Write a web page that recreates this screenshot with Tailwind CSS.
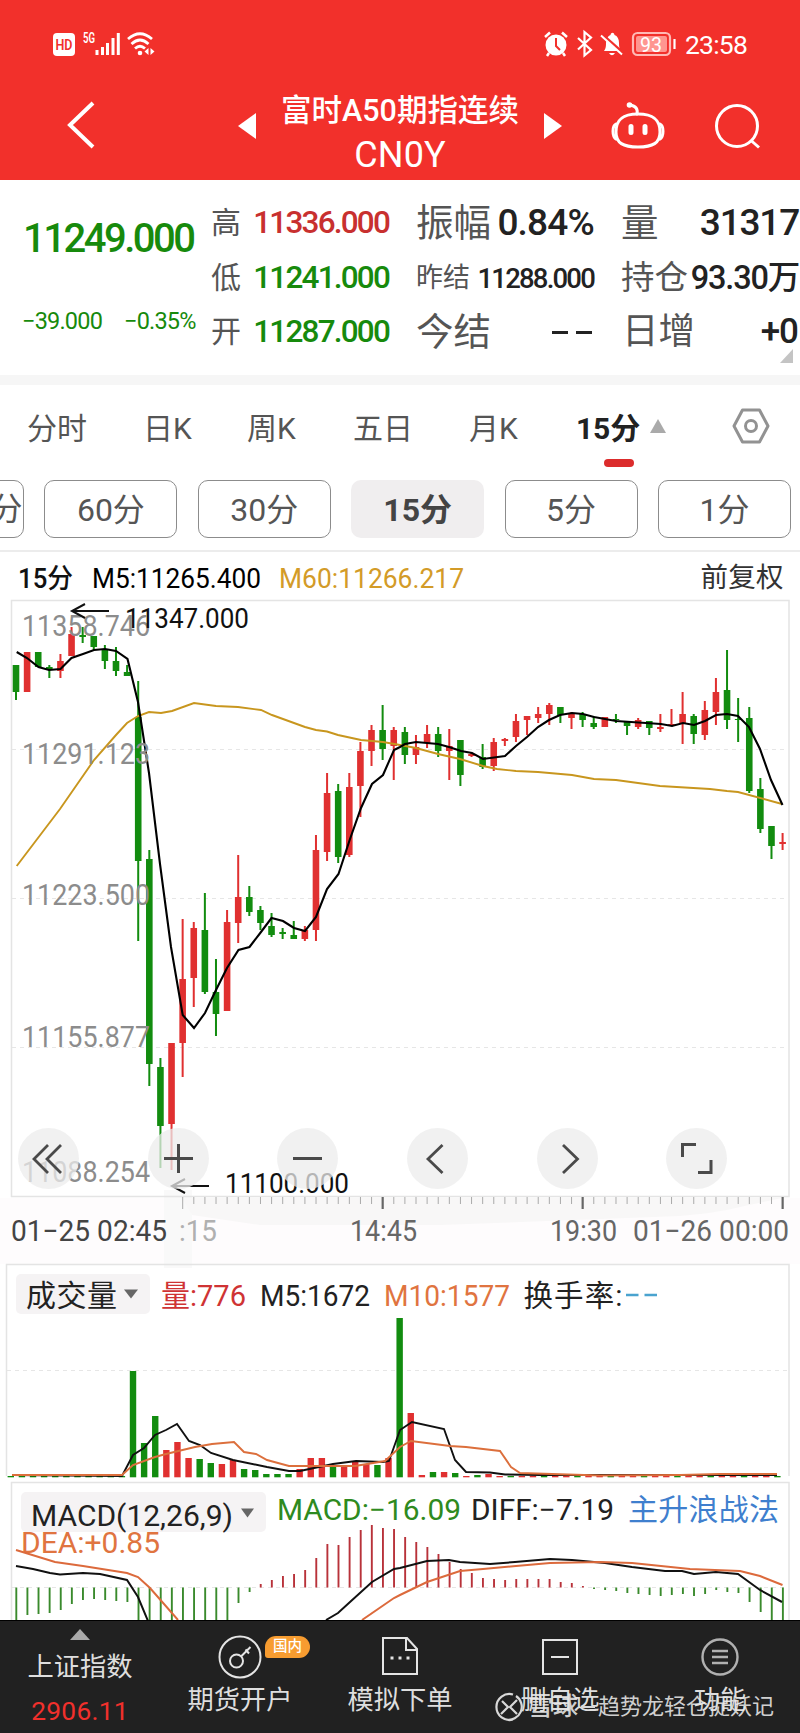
<!DOCTYPE html>
<html lang="zh-CN">
<head>
    <meta charset="UTF-8">
    <meta name="viewport" content="width=device-width, initial-scale=1.0">
    <title>富时A50期指连续 CN0Y</title>
    <script src="https://cdn.jsdelivr.net/npm/@tailwindcss/browser@4"></script>
</head>
<body class="w-[800px] h-[1733px] overflow-hidden bg-white text-[#222] font-['Roboto','Noto_Sans_CJK_SC',sans-serif] whitespace-nowrap">

    <!-- Header -->
    <header class="h-[180px] bg-[#f2302b] text-white">
        <div class="h-[88px] flex items-center justify-between pl-[53px] pr-[53px]">
            <svg class="w-[104px] h-[30px]" viewBox="53 29 104 30" fill="none" stroke="#fff">
                <rect x="53" y="33" width="22" height="23" rx="4" fill="#fff" stroke="none"/>
                <text x="55.5" y="50" font-size="15" font-weight="600" fill="#f2302b" stroke="none" textLength="17" lengthAdjust="spacingAndGlyphs">HD</text>
                <text x="83" y="43" font-size="15" font-weight="600" fill="#fff" stroke="none" textLength="12" lengthAdjust="spacingAndGlyphs">5G</text>
                <path d="M97 55V50M102.5 55V47M107.5 55V43M113 55V38M118.3 55V33" stroke-width="3"/>
                <path d="M128 39Q140 28.500 152 39M131.500 44Q140 36 148.500 44M135 48.500Q140 44 145 48.500" stroke-width="2.800"/>
                <circle cx="140" cy="53" r="2.300" fill="#fff" stroke="none"/>
                <path d="M148.500 48v7l-4-3.500zM150.500 48v7l4-3.500z" fill="#fff" stroke="none"/>
            </svg>
            <div class="flex items-center">
                <svg class="w-[136px] h-[30px]" viewBox="542 29 136 30" fill="none" stroke="#fff">
                    <circle cx="556" cy="45" r="10.500" fill="#fff" stroke="none"/>
                    <path d="M545 37l5-4.500M567 37l-5-4.500M549 53l-2 3M563 53l2 3" stroke-width="2.500"/>
                    <path d="M556 38v8l4 4" stroke="#f2302b" stroke-width="2"/>
                    <path d="M578 38l13 12-6.500 5.500V32l6.500 5.500-13 12" stroke-width="2.200"/>
                    <path d="M604 51c2-3 2-5 2-8 0-4 2-7 4.500-8 .5-3 3.500-3 4 0 3 1 4.500 4 4.500 8 0 3 0 5 2 8zM609 53h6q-3 4.500-6 0z" fill="#fff" stroke="none"/>
                    <path d="M602.500 35l21 18.500" stroke="#f2302b" stroke-width="3"/>
                    <path d="M601 35.500l21 19" stroke-width="2"/>
                    <rect x="633" y="33" width="37" height="22" rx="4.500" stroke="#ffb9b5" stroke-width="2.200"/>
                    <rect x="636" y="36" width="31" height="16" rx="2" fill="#ff9690" stroke="none"/>
                    <path d="M674.500 39v10" stroke-width="2.200"/>
                    <text x="640" y="51.500" font-size="20" font-weight="400" fill="#fff" stroke="none" textLength="22" lengthAdjust="spacingAndGlyphs">93</text>
                </svg>
                <span class="ml-[7px] text-[26.500px] tracking-[-0.8px] leading-[30px] mt-[1px]">23:58</span>
            </div>
        </div>
        <div class="h-[92px] flex items-start relative">
            <svg class="w-[36px] h-[60px] ml-[62px] mt-[7px]" viewBox="62 95 36 60" fill="none" stroke="#fff" stroke-width="4"><path d="M93 103L70 125l23 22"/></svg>
            <svg class="w-[20px] h-[28px] ml-[139px] mt-[24px]" viewBox="0 0 20 28" fill="#fff"><path d="M1 14L19 1v26z"/></svg>
            <div class="w-[286px] text-center">
                <div class="text-[30.500px] leading-[42px] font-medium mt-[2px]">富时A50期指连续</div>
                <div class="text-[36px] leading-[42px] font-normal tracking-[0.1px] mt-[2px]">CN0Y</div>
            </div>
            <svg class="w-[20px] h-[28px] mt-[24px]" viewBox="0 0 20 28" fill="#fff"><path d="M19 14L1 1v26z"/></svg>
            <svg class="w-[60px] h-[54px] ml-[45px] mt-[10px]" viewBox="608 98 60 54" fill="none" stroke="#fff" stroke-width="3">
                <path d="M638 114c17 0 22 7 22 18 0 11-7 15-22 15s-22-4-22-15c0-11 5-18 22-18z"/>
                <path d="M616 124c-4 2-4 12 0 15M660 124c4 2 4 12 0 15M637 114c1-5-1-8-7-9" stroke-linecap="round"/>
                <circle cx="629.500" cy="105" r="2.800" fill="#fff" stroke="none"/>
                <path d="M631 126.500v6M645 126.500v6" stroke-width="5" stroke-linecap="round"/>
            </svg>
            <svg class="w-[50px] h-[54px] ml-[44px] mt-[10px]" viewBox="712 98 50 54" fill="none" stroke="#fff" stroke-width="3"><circle cx="737" cy="126" r="20.500"/><path d="M750.500 140l8.500 7.500"/></svg>
        </div>
    </header>

    <!-- Quote -->
    <section class="h-[195px] flex pt-[15px] relative">
        <div class="w-[211px] pl-[23px] text-[#178a0c]">
            <div class="text-[40px] leading-[48px] font-medium tracking-[-2.500px] mt-[20px]">11249.000</div>
            <div class="flex text-[23.500px] leading-[28px] tracking-[-0.8px] mt-[44px]">
                <span class="w-[102px] -ml-px">−39.000</span><span>−0.35%</span>
            </div>
        </div>
        <div class="w-[178px] text-[31.500px] font-medium tracking-[-1.800px] text-[#178a0c]">
            <div class="h-[55px] flex items-center justify-between"><span class="text-[30px] font-normal text-[#555] tracking-normal">高</span><span class="text-[#c8302f]">11336.000</span></div>
            <div class="h-[55px] flex items-center justify-between"><span class="text-[30px] font-normal text-[#555] tracking-normal">低</span><span>11241.000</span></div>
            <div class="h-[53px] flex items-center justify-between"><span class="text-[30px] font-normal text-[#555] tracking-normal">开</span><span>11287.000</span></div>
        </div>
        <div class="w-[178px] ml-[27px] font-medium">
            <div class="h-[56px] flex items-center justify-between"><span class="text-[37.500px] font-normal text-[#555]">振幅</span><span class="text-[37px] tracking-[-0.800px]">0.84%</span></div>
            <div class="h-[55px] flex items-center justify-between"><span class="text-[27px] font-normal text-[#555]">昨结</span><span class="text-[27.500px] tracking-[-1.800px]">11288.000</span></div>
            <div class="h-[53px] flex items-center justify-between"><span class="text-[37.500px] font-normal text-[#555]">今结</span><span class="flex gap-[8px] pr-[2px]"><i class="w-[16px] h-[3px] bg-[#222]"></i><i class="w-[16px] h-[3px] bg-[#222]"></i></span></div>
        </div>
        <div class="w-[178px] ml-[27px] font-medium">
            <div class="h-[56px] flex items-center justify-between"><span class="text-[37.500px] font-normal text-[#555]">量</span><span class="text-[37px] tracking-[-1.200px]">31317</span></div>
            <div class="h-[55px] flex items-center justify-between"><span class="text-[33.500px] font-normal text-[#555]">持仓</span><span class="text-[32.500px] tracking-[-1.200px]">93.30万</span></div>
            <div class="h-[53px] flex items-center justify-between"><span class="text-[36.500px] font-normal text-[#555] pl-px">日增</span><span class="text-[35px] tracking-[-1px] pr-px">+0</span></div>
        </div>
        <svg class="absolute left-[780px] top-[169px] w-[13px] h-[14px]" viewBox="0 0 13 14" fill="#c4c4c4"><path d="M13 0v14H0z"/></svg>
    </section>
    <div class="h-[10px] bg-[#f6f6f6]"></div>

    <!-- Period tabs -->
    <nav class="h-[86px] flex items-center text-[30px] text-[#555] pl-[27px]">
        <span class="w-[116px]">分时</span>
        <span class="w-[104px]">日K</span>
        <span class="w-[106px]">周K</span>
        <span class="w-[116px]">五日</span>
        <span class="w-[107px]">月K</span>
        <span class="w-[74px] font-bold text-[#222] tracking-[-0.1px] relative">15分<i class="absolute left-[28px] top-[53px] w-[30px] h-[8px] rounded-full bg-[#dc2c2c]"></i></span>
        <svg class="w-[16px] h-[14px] -mt-[4px]" viewBox="0 0 16 14" fill="#aaa"><path d="M8 0l8 14H0z"/></svg>
        <svg class="w-[38px] h-[36px] ml-[66px] -mt-[4px]" viewBox="0 0 38 36" fill="none" stroke="#929292" stroke-width="3"><path d="M10.500 2h17L36 18l-8.500 16h-17L2 18z" stroke-linejoin="round"/><circle cx="19" cy="18" r="5.500"/></svg>
    </nav>
    <div class="h-[81px] pt-[9px] flex gap-[20.400px] -ml-[109px] w-[909px] text-[32px] text-[#555] border-b-2 border-[#ececec]">
        <div class="w-[133px] h-[58px] shrink-0 border border-[#8c8c8c] rounded-[10px] flex items-center justify-center"><span class="pl-[44px]">120分</span></div>
        <div class="w-[133px] h-[58px] shrink-0 border border-[#8c8c8c] rounded-[10px] flex items-center justify-center pt-[2px]">60分</div>
        <div class="w-[133px] h-[58px] shrink-0 border border-[#8c8c8c] rounded-[10px] flex items-center justify-center pt-[2px]">30分</div>
        <div class="w-[133px] h-[58px] shrink-0 bg-[#f0eeef] rounded-[10px] flex items-center justify-center pt-[2px] font-bold text-[#444]">15分</div>
        <div class="w-[133px] h-[58px] shrink-0 border border-[#8c8c8c] rounded-[10px] flex items-center justify-center pt-[2px]">5分</div>
        <div class="w-[133px] h-[58px] shrink-0 border border-[#8c8c8c] rounded-[10px] flex items-center justify-center pt-[2px]">1分</div>
    </div>

    <!-- Charts, drawn in page pixels -->
    <main class="relative h-[1068px]">
        <svg id="chart" class="block w-[800px] h-[1068px]" viewBox="0 552 800 1068" fill="none">
            <rect x="0" y="1198" width="800" height="66" fill="#fefcfd"/>
            <rect x="164" y="1190" width="28" height="78" fill="#f9f9f9"/>
            <path d="M182 1198H783C740 1206 730 1212 680 1216L440 1225H260L192 1215z" fill="#f8f7f7"/>
            <g stroke="#e4e4e4" stroke-width="1.500">
                <path d="M11.500 600.500H789V1196.500H11.500z"/>
                <path d="M6.500 1476V1264.500H789V1476"/>
                <path d="M11.500 1620V1482.500H789V1620"/>
            </g>
            <g stroke="#e6e6e6" stroke-dasharray="4 4">
                <path d="M12 749.500H788M12 898.500H788M12 1047.500H788M7 1370.500H788M12 1587.500H788"/>
            </g>
            <g id="ticks" stroke="#aaa"></g>
            <g id="candles"></g>
            <path stroke="#c8961e" stroke-width="1.900" d="M16.700 866L60 809L94 760L116 735L127 723L138 716L149 712L161 713L172 711L194 703L216 706L238 707L261 710L272 715L305 727L316 730L327 731.500L338 735L361 740L372 741L383 742L400 745L416 748L438 754L460 759L483 766L497 769L516 771L538 772L572 775L594 779L616 780L660 786L710 789L727 791L738 792L782 804"/>
            <path stroke="#000" stroke-width="2.100" d="M16.700 652L27 658L38.500 667L49 670L60.500 669L71.500 658L83 654L94 650L105 649L116 651L127.500 659L138 702L149 773L160 864L171 947L182.700 1015L194 1028L205 1013L216 990L227 968L238.500 950L249.500 947L261 932L271.500 918L283 921L294 928L305 931L316 917L327 889L338.500 874L350 839L361 808L372 784L383 775L394 750L400 747L405 744L416 742L438 744L449 747L461 751L472 753L483 759L505 756L516 746L527 737L538 727L549 720L560 715L572 713L583 714L594 717L616 721L661 724L672 726L683 723L694 725L705 721L716 715L727 714L738 716L749 727L760 749L771 780L782.500 805"/>

            <g font-size="27.500" font-weight="400">
                <text x="18" y="587.500" fill="#111" font-weight="500" textLength="55" lengthAdjust="spacingAndGlyphs">15分</text>
                <text x="92" y="587.500" fill="#000" textLength="169" lengthAdjust="spacingAndGlyphs">M5:11265.400</text>
                <text x="279" y="587.500" fill="#d39b28" textLength="185" lengthAdjust="spacingAndGlyphs">M60:11266.217</text>
                <text x="700.500" y="587" fill="#333" textLength="83">前复权</text>
            </g>
            <g font-size="29.500" fill="#8c8c8c">
                <text x="22" y="636" textLength="128" lengthAdjust="spacingAndGlyphs">11358.746</text>
                <text x="22" y="763.500" textLength="128" lengthAdjust="spacingAndGlyphs">11291.123</text>
                <text x="22" y="905" textLength="128" lengthAdjust="spacingAndGlyphs">11223.500</text>
                <text x="22" y="1047" textLength="128" lengthAdjust="spacingAndGlyphs">11155.877</text>
                <text x="22" y="1182" textLength="128" lengthAdjust="spacingAndGlyphs">11088.254</text>
            </g>
            <g font-size="27" fill="#111">
                <text x="125" y="627.500" textLength="124" lengthAdjust="spacingAndGlyphs">11347.000</text>
                <text x="225" y="1193" textLength="124" lengthAdjust="spacingAndGlyphs">11100.000</text>
            </g>
            <g stroke="#111" stroke-width="2">
                <path d="M109 611H72M85 604L72 611L85 618"/>
                <path d="M209 1186H172M185 1179L172 1186L185 1193"/>
            </g>
            <g font-size="29" font-weight="400" fill="#666">
                <text x="11" y="1241" fill="#444" textLength="156" lengthAdjust="spacingAndGlyphs">01−25 02:45</text>
                <text x="179" y="1241" fill="#b0b0b0" textLength="38" lengthAdjust="spacingAndGlyphs">:15</text>
                <text x="350" y="1241" textLength="67" lengthAdjust="spacingAndGlyphs">14:45</text>
                <text x="550" y="1241" textLength="67" lengthAdjust="spacingAndGlyphs">19:30</text>
                <text x="633" y="1241" textLength="156" lengthAdjust="spacingAndGlyphs">01−26 00:00</text>
            </g>

            <!-- Volume -->
            <rect x="16" y="1274" width="134" height="40" rx="5" fill="#f5f3f4"/>
            <path d="M124 1289.500h14l-7 9z" fill="#666"/>
            <text x="26" y="1306" font-size="30" fill="#222" textLength="91">成交量</text>
            <g font-size="29.500" font-weight="400">
                <text x="161" y="1306" fill="#cf3334" textLength="85" lengthAdjust="spacingAndGlyphs">量:776</text>
                <text x="260" y="1306" fill="#222" textLength="110" lengthAdjust="spacingAndGlyphs">M5:1672</text>
                <text x="384" y="1306" fill="#e07440" textLength="126" lengthAdjust="spacingAndGlyphs">M10:1577</text>
                <text x="523.500" y="1306" fill="#222" textLength="99">换手率:</text>
                <path d="M626 1295h12.500M644.500 1295h12.500" stroke="#4aa3cf" stroke-width="2.600"/>
            </g>
            <g id="volume"></g>
            <path stroke="#111" stroke-width="1.900" d="M12 1475L122 1476L133 1455L144 1448L155 1435L166 1430L177 1424L189 1441L200 1445L211 1453L233 1460L267 1467L289 1471L300 1471L333 1464L356 1461L383 1462L389 1461L400 1430L412 1422L444 1429L455 1460L466 1472L490 1472.500L505 1474.500L540 1475L777 1475"/>
            <path stroke="#dc6f3c" stroke-width="1.900" d="M12 1475L122 1475L133 1465L155 1457L166 1454L195 1447L212 1444L234 1442L244 1452L256 1454L267 1460L289 1466L355 1466L385 1461L400 1447L411 1441L450 1446L466 1447L500 1451L511 1467L520 1473L600 1475.500L680 1475L720 1474L777 1474"/>

            <!-- MACD -->
            <rect x="21" y="1492" width="245" height="40" rx="5" fill="#f5f3f4"/>
            <path d="M241 1508.500h13l-6.500 9z" fill="#666"/>
            <g font-size="29.500" font-weight="400">
                <text x="31" y="1525.500" fill="#222" textLength="202" lengthAdjust="spacingAndGlyphs">MACD(12,26,9)</text>
                <text x="277" y="1520" fill="#2e8a20" textLength="184" lengthAdjust="spacingAndGlyphs">MACD:−16.09</text>
                <text x="471" y="1520" fill="#222" textLength="143" lengthAdjust="spacingAndGlyphs">DIFF:−7.19</text>
                <text x="628" y="1520" fill="#3f7fce" font-size="30" textLength="151">主升浪战法</text>
                <text x="21" y="1552.500" fill="#e07440" textLength="139" lengthAdjust="spacingAndGlyphs">DEA:+0.85</text>
            </g>
            <g id="macd" stroke-width="1.900"></g>
            <path stroke="#111" stroke-width="2" d="M16 1566L33 1569L50 1573L60 1574.500L83 1573L100 1574L127 1580L138 1597L148 1621M326 1620L338 1613L350 1602L372 1582L394 1569L400 1568L427 1561L449 1560L460 1562L490 1564L515 1562L550 1559L572 1560L605 1563L632 1567L665 1571L682 1571L694 1574L716 1572L738 1574L760 1590L782 1602"/>
            <path stroke="#dc6a3c" stroke-width="2" d="M16 1550L55 1562L83 1566L127 1573L138 1577L150 1588L178 1620M362 1620L394 1598L400 1595L427 1582L460 1571L483 1569L516 1566L550 1563L600 1562L632 1563L690 1569L740 1571L760 1576L782.500 1585"/>
        </svg>

        <!-- Chart controls -->
        <div class="absolute left-[18px] top-[576px] flex gap-[68.700px]">
            <button class="w-[61px] h-[61px] rounded-full bg-[#ececec]/75"><svg viewBox="0 0 61 61" fill="none" stroke="#4a4a4a" stroke-width="2.800"><path d="M30 17L16 31l14 14M43 17L29 31l14 14"/></svg></button>
            <button class="w-[61px] h-[61px] rounded-full bg-[#ececec]/75"><svg viewBox="0 0 61 61" fill="none" stroke="#4a4a4a" stroke-width="3"><path d="M16 30.500h29M30.500 16v29"/></svg></button>
            <button class="w-[61px] h-[61px] rounded-full bg-[#ececec]/75"><svg viewBox="0 0 61 61" fill="none" stroke="#4a4a4a" stroke-width="3"><path d="M16 30.500h29"/></svg></button>
            <button class="w-[61px] h-[61px] rounded-full bg-[#ececec]/75"><svg viewBox="0 0 61 61" fill="none" stroke="#4a4a4a" stroke-width="2.800"><path d="M35.500 17L21 31l14.500 14"/></svg></button>
            <button class="w-[61px] h-[61px] rounded-full bg-[#ececec]/75"><svg viewBox="0 0 61 61" fill="none" stroke="#4a4a4a" stroke-width="2.800"><path d="M26 17l14.500 14L26 45"/></svg></button>
            <button class="w-[61px] h-[61px] rounded-full bg-[#ececec]/75"><svg viewBox="0 0 61 61" fill="none" stroke="#4a4a4a" stroke-width="3"><path d="M16.500 29V16.500H30M45 32v12.500H32"/></svg></button>
        </div>
    </main>

    <!-- Bottom bar -->
    <footer class="relative h-[113px] bg-[#212121] border-t border-black text-[#dedede] text-[26.300px] leading-[34px] grid grid-cols-5 text-center">
        <div>
            <svg class="w-[20px] h-[11px] mx-auto mt-[8px]" viewBox="0 0 20 11" fill="#aaa"><path d="M10 0l10 11H0z"/></svg>
            <div class="mt-[10px]">上证指数</div>
            <div class="text-[#f0302c] mt-[11px] tracking-[0.3px] leading-[32px]">2906.11</div>
        </div>
        <div class="relative">
            <svg class="w-[44px] h-[44px] mx-auto mt-[14px]" viewBox="0 0 44 44" fill="none" stroke="#e4e4e4" stroke-width="2"><circle cx="22" cy="22" r="20.500"/><circle cx="18.500" cy="26" r="6.500"/><path d="M23 21.500l9.500-9.500M27.500 14.500l3.500 4" /></svg>
            <span class="absolute left-[105px] top-[15px] w-[45px] h-[22px] rounded-[11px] rounded-bl-[3px] bg-[#f79c30] text-white text-[14.500px] leading-[21px] font-medium">国内</span>
            <div class="mt-[4px]">期货开户</div>
        </div>
        <div>
            <svg class="w-[38px] h-[42px] mx-auto mt-[15px]" viewBox="0 0 38 42" fill="none" stroke="#e4e4e4" stroke-width="2"><path d="M2 2h24l10 11v25H2zM25 2v12h11"/><path d="M9.500 22h3M17.500 22h3M25.500 22h3" stroke-width="3"/></svg>
            <div class="mt-[5px]">模拟下单</div>
        </div>
        <div>
            <svg class="w-[38px] h-[42px] mx-auto mt-[15px]" viewBox="0 0 38 42" fill="none" stroke="#e4e4e4" stroke-width="2"><path d="M2 4h34v34H2zM10 21h18"/></svg>
            <div class="mt-[5px]">删自选</div>
        </div>
        <div>
            <svg class="w-[38px] h-[42px] mx-auto mt-[15px]" viewBox="0 0 38 42" fill="none" stroke="#b0b0b0" stroke-width="2.400"><circle cx="19" cy="21" r="17.500"/><path d="M11 15h16M11 21h16M11 27h16"/></svg>
            <div class="mt-[5px]">功能</div>
        </div>
        <div class="absolute left-[494px] top-[71px] flex items-center text-[22px] leading-[30px] text-[#e8e8e8]/90">
            <svg class="w-[30px] h-[30px]" viewBox="0 0 30 30" fill="none" stroke="#d8d8d8" stroke-width="2.200"><path d="M19 2.500A13 13 0 1 0 19 27.500M12 27.500A13 13 0 0 0 22 4"/><path d="M8 9l6 6-7 7M23 8l-7 7 7 7"/></svg>
            <span class="ml-[4px] text-[25px] font-medium">雪球</span><span class="ml-[3px] w-[14px] h-[2px] bg-[#d8d8d8]"></span><span class="ml-[3px]">趋势龙轻仓捉妖记</span>
        </div>
    </footer>

    <script>
        const RED = "#e03030";
        const GREEN = "#128c0f";
        const STEP = 11.11;

        // colour, high, body top, body bottom, low
        const candles = [
            ["g",665,665,692,700],["r",652,652,692,692],["g",652,652,667,667],["g",665,667,670,678],["r",654,661,671,678],
            ["r",627,634,656,656],["g",627,635,637,643],["g",636,636,647,650],["g",645,650,661,669],["g",647,661,671,676],
            ["g",665,672,676,676],["g",681,717,861,941],["g",850,859,1064,1086],["g",1058,1067,1126,1168],["r",1043,1043,1124,1170],
            ["r",919,979,1043,1077],["r",922,928,978,1007],["g",893,930,992,994],["g",959,992,1014,1036],["r",910,922,1011,1011],
            ["r",855,897,923,943],["g",886,897,912,916],["g",906,910,923,930],["g",913,926,935,937],["g",928,932,934,939],
            ["g",921,935,939,939],["r",926,930,939,941],["r",835,850,930,941],["r",773,793,852,861],["g",784,791,857,863],
            ["r",773,787,855,857],["r",742,751,786,817],["r",725,730,751,766],["g",705,730,749,760],["r",727,730,746,780],
            ["g",727,732,755,764],["r",735,747,755,764],["r",725,734,743,748],["g",727,734,751,757],["r",729,746,751,780],
            ["g",740,740,775,786],["r",753,754,756,757],["g",744,757,767,769],["r",738,742,766,771],["r",738,739,741,746],
            ["r",714,721,737,742],["r",716,716,720,735],["r",707,714,718,723],["r",703,705,714,725],["g",707,707,715,723],
            ["r",712,714,718,729],["g",712,714,720,727],["g",716,723,727,729],["r",717,717,727,727],["g",714,719,720,723],
            ["g",722,722,726,735],["r",718,720,727,729],["g",721,721,728,735],["r",714,727,729,732],["r",709,724,726,726],
            ["r",692,714,723,744],["g",714,716,734,744],["r",701,710,735,740],["r",678,692,712,725],["g",650,690,720,729],
            ["g",698,719,720,742],["g",707,718,791,793],["g",778,789,829,833],["g",826,826,846,859],["r",833,842,844,850]
        ];

        // top of each volume bar, starting at the 12th candle
        const volumes = [
            ["g",1371],["g",1443],["g",1416],["r",1450],["r",1442],["r",1458],["g",1459],["g",1463],["r",1464],["r",1460],
            ["g",1469],["g",1470],["g",1474],["g",1474],["g",1474],["r",1469],["r",1458],["r",1458],["g",1467],["r",1467],
            ["r",1462],["r",1464],["g",1465],["r",1458],["g",1318],["r",1413],["r",1475],["g",1472],["r",1472],["g",1473],
            ["r",1476],["g",1475],["r",1474]
        ];

        const macd = [
            1625,1615,1614,1613,1610,1604,1600,1599,1600,1601,1602,1625,1625,1625,1625,1625,1625,1625,1625,1625,
            1603,1592,1584,1580,1576,1574,1570,1558,1544,1545,1537,1530,1525,1528,1529,1537,1542,1547,1554,1562,
            1569,1573,1578,1579,1580,1579,1579,1579,1579,1582,1583,1586,1589,1590,1591,1593,1594,1595,1596,1595,
            1594,1596,1594,1590,1592,1593,1602,1612,1625,1625
        ];

        let out = "";
        candles.forEach(([c, high, top, bottom, low], i) => {
            const x = 16 + STEP * i;
            const fill = c === "r" ? RED : GREEN;
            out += `<rect x="${x - 1}" y="${high}" width="2" height="${low - high}" fill="${fill}"/>`;
            out += `<rect x="${x - 3.3}" y="${top}" width="6.6" height="${bottom - top}" fill="${fill}"/>`;
        });
        document.getElementById("candles").innerHTML = out;

        out = "";
        for (let i = 0; i < 70; i++) {
            const v = i < 11 ? ["g", 1476] : volumes[i - 11] || [i % 3 ? "r" : "g", 1476];
            out += `<rect x="${10.8 + STEP * i - 3.2}" y="${v[1]}" width="6.4" height="${1477.3 - v[1]}" fill="${v[0] === "r" ? RED : GREEN}"/>`;
        }
        document.getElementById("volume").innerHTML = out;

        out = "";
        macd.forEach((y, i) => {
            out += `<path d="M${16.3 + STEP * i} 1587.5V${y}" stroke="${y < 1587 ? "#b8323a" : "#3a8a2c"}"/>`;
        });
        document.getElementById("macd").innerHTML = out;

        out = "";
        for (let i = 0; i <= 54; i++) {
            const x = 182.7 + STEP * i;
            const long = i === 18 || i === 36 || i === 54;
            out += long
                ? `<path d="M${x} 1197V1209" stroke="#666" stroke-width="2.2"/>`
                : `<path d="M${x} 1197V${i ? 1204 : 1209}"/>`;
        }
        document.getElementById("ticks").innerHTML = out;
    </script>
</body>
</html>
